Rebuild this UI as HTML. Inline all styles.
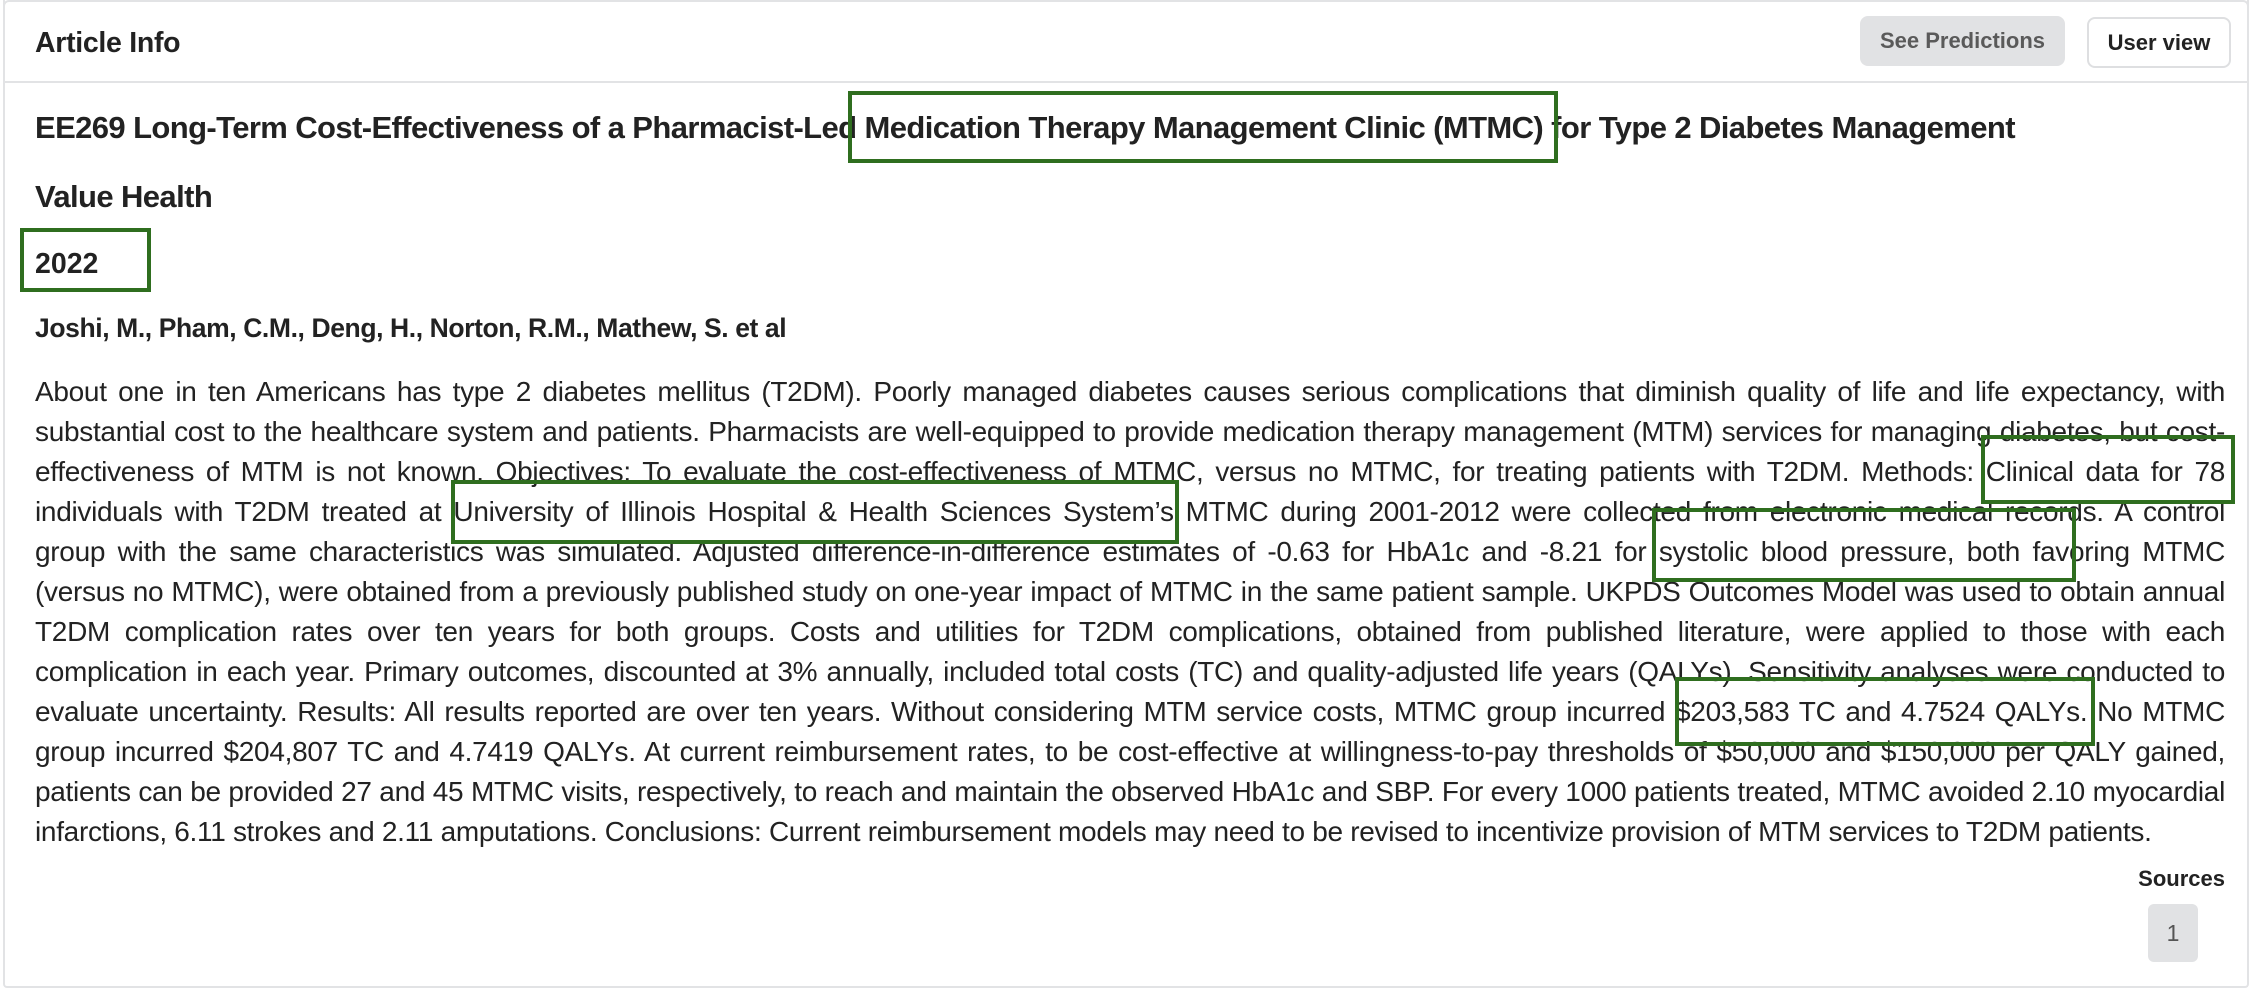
<!DOCTYPE html>
<html><head><meta charset="utf-8"><style>
html,body{margin:0;padding:0;background:#fff;}
body{width:2258px;height:998px;position:relative;overflow:hidden;font-family:"Liberation Sans",sans-serif;color:#222;}
.card{position:absolute;left:3px;top:0;width:2246px;height:988px;border:2px solid #e2e3e5;border-top:none;border-radius:0 0 4px 4px;box-sizing:border-box;}
.hdr{position:absolute;left:3px;top:0;width:2246px;height:83px;border:2px solid #e2e3e5;border-radius:6px 6px 0 0;box-sizing:border-box;}
.t{position:absolute;white-space:nowrap;font-weight:bold;}
.btn{position:absolute;box-sizing:border-box;border-radius:8px;font-weight:bold;font-size:22px;display:flex;align-items:center;justify-content:center;}
.body{position:absolute;left:35px;top:372px;width:2190px;font-size:28px;line-height:40px;color:#222;letter-spacing:-0.3px;}
.body div{text-align:justify;text-align-last:justify;white-space:nowrap;height:40px;}
.body div.l{text-align-last:left;}
.box{position:absolute;border:4px solid #2f6e1f;box-sizing:border-box;}
</style></head><body>
<div class="card"></div>
<div class="hdr"></div>
<div class="t" style="left:35px;top:27px;font-size:28.5px;letter-spacing:-0.3px;">Article Info</div>
<div class="btn" style="left:1860px;top:16px;width:205px;height:50px;background:#e1e2e4;color:#5a5a5a;">See Predictions</div>
<div class="btn" style="left:2087px;top:17px;width:144px;height:51px;background:#fff;border:2px solid #dedfe1;color:#222;">User view</div>

<div class="t" style="left:35px;top:110px;font-size:31px;letter-spacing:-0.6px;">EE269 Long-Term Cost-Effectiveness of a Pharmacist-Led Medication Therapy Management Clinic (MTMC) for Type 2 Diabetes Management</div>
<div class="t" style="left:35px;top:179px;font-size:31px;letter-spacing:-0.6px;">Value Health</div>
<div class="t" style="left:35px;top:248px;font-size:28.5px;">2022</div>
<div class="t" style="left:35px;top:313px;font-size:26.5px;letter-spacing:-0.4px;">Joshi, M., Pham, C.M., Deng, H., Norton, R.M., Mathew, S. et al</div>

<div class="body">
<div>About one in ten Americans has type 2 diabetes mellitus (T2DM). Poorly managed diabetes causes serious complications that diminish quality of life and life expectancy, with</div>
<div>substantial cost to the healthcare system and patients. Pharmacists are well-equipped to provide medication therapy management (MTM) services for managing diabetes, but cost-</div>
<div>effectiveness of MTM is not known. Objectives: To evaluate the cost-effectiveness of MTMC, versus no MTMC, for treating patients with T2DM. Methods: Clinical data for 78</div>
<div>individuals with T2DM treated at University of Illinois Hospital &amp; Health Sciences System’s MTMC during 2001-2012 were collected from electronic medical records. A control</div>
<div>group with the same characteristics was simulated. Adjusted difference-in-difference estimates of -0.63 for HbA1c and -8.21 for systolic blood pressure, both favoring MTMC</div>
<div>(versus no MTMC), were obtained from a previously published study on one-year impact of MTMC in the same patient sample. UKPDS Outcomes Model was used to obtain annual</div>
<div>T2DM complication rates over ten years for both groups. Costs and utilities for T2DM complications, obtained from published literature, were applied to those with each</div>
<div>complication in each year. Primary outcomes, discounted at 3% annually, included total costs (TC) and quality-adjusted life years (QALYs). Sensitivity analyses were conducted to</div>
<div>evaluate uncertainty. Results: All results reported are over ten years. Without considering MTM service costs, MTMC group incurred $203,583 TC and 4.7524 QALYs. No MTMC</div>
<div>group incurred $204,807 TC and 4.7419 QALYs. At current reimbursement rates, to be cost-effective at willingness-to-pay thresholds of $50,000 and $150,000 per QALY gained,</div>
<div>patients can be provided 27 and 45 MTMC visits, respectively, to reach and maintain the observed HbA1c and SBP. For every 1000 patients treated, MTMC avoided 2.10 myocardial</div>
<div class="l">infarctions, 6.11 strokes and 2.11 amputations. Conclusions: Current reimbursement models may need to be revised to incentivize provision of MTM services to T2DM patients.</div>
</div>

<div class="t" style="right:33px;top:866px;font-size:22px;">Sources</div>
<div class="btn" style="left:2148px;top:904px;width:50px;height:58px;background:#e1e2e4;color:#555;font-weight:normal;font-size:23px;border-radius:6px;">1</div>

<div class="box" style="left:848px;top:91px;width:710px;height:72px;"></div>
<div class="box" style="left:20px;top:228px;width:131px;height:64px;"></div>
<div class="box" style="left:1981px;top:435px;width:254px;height:69px;"></div>
<div class="box" style="left:451px;top:480px;width:728px;height:64px;"></div>
<div class="box" style="left:1652px;top:508px;width:424px;height:74px;"></div>
<div class="box" style="left:1675px;top:677px;width:420px;height:69px;"></div>
</body></html>
